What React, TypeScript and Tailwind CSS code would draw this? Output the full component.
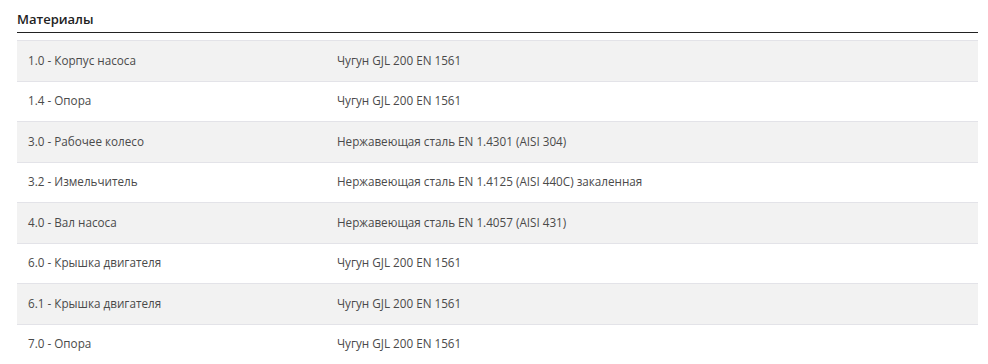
import React from 'react';

const rows = [
    { part: '1.0 - Корпус насоса', material: 'Чугун GJL 200 EN 1561' },
    { part: '1.4 - Опора', material: 'Чугун GJL 200 EN 1561' },
    { part: '3.0 - Рабочее колесо', material: 'Нержавеющая сталь EN 1.4301 (AISI 304)' },
    { part: '3.2 - Измельчитель', material: 'Нержавеющая сталь EN 1.4125 (AISI 440C) закаленная' },
    { part: '4.0 - Вал насоса', material: 'Нержавеющая сталь EN 1.4057 (AISI 431)' },
    { part: '6.0 - Крышка двигателя', material: 'Чугун GJL 200 EN 1561' },
    { part: '6.1 - Крышка двигателя', material: 'Чугун GJL 200 EN 1561' },
    { part: '7.0 - Опора', material: 'Чугун GJL 200 EN 1561' },
];

const App = () => {
    return (
        <div className="w-[988px] h-[364px] overflow-hidden bg-white pl-[17px] pr-[10px] pt-[10px] font-['Open_Sans',sans-serif]">
            <p className="text-[13px] font-semibold text-[#222] leading-[18px] pb-[4px] border-b border-[#222]">Материалы</p>

            <div className="mt-[7px] w-[961px] text-[11.7px] text-[#4a4a4a]">
                {rows.map((row, index) => (
                    <div
                        key={index}
                        className={`flex items-center h-[40.5px] border-t border-[#e3e3e8] ${index % 2 === 0 ? 'bg-[#f2f2f2]' : 'bg-white'}`}
                    >
                        <div className="w-[320px] pl-[11px] whitespace-nowrap">{row.part}</div>
                        <div className="flex-1 whitespace-nowrap">{row.material}</div>
                    </div>
                ))}
            </div>
        </div>
    );
};

export default App;
